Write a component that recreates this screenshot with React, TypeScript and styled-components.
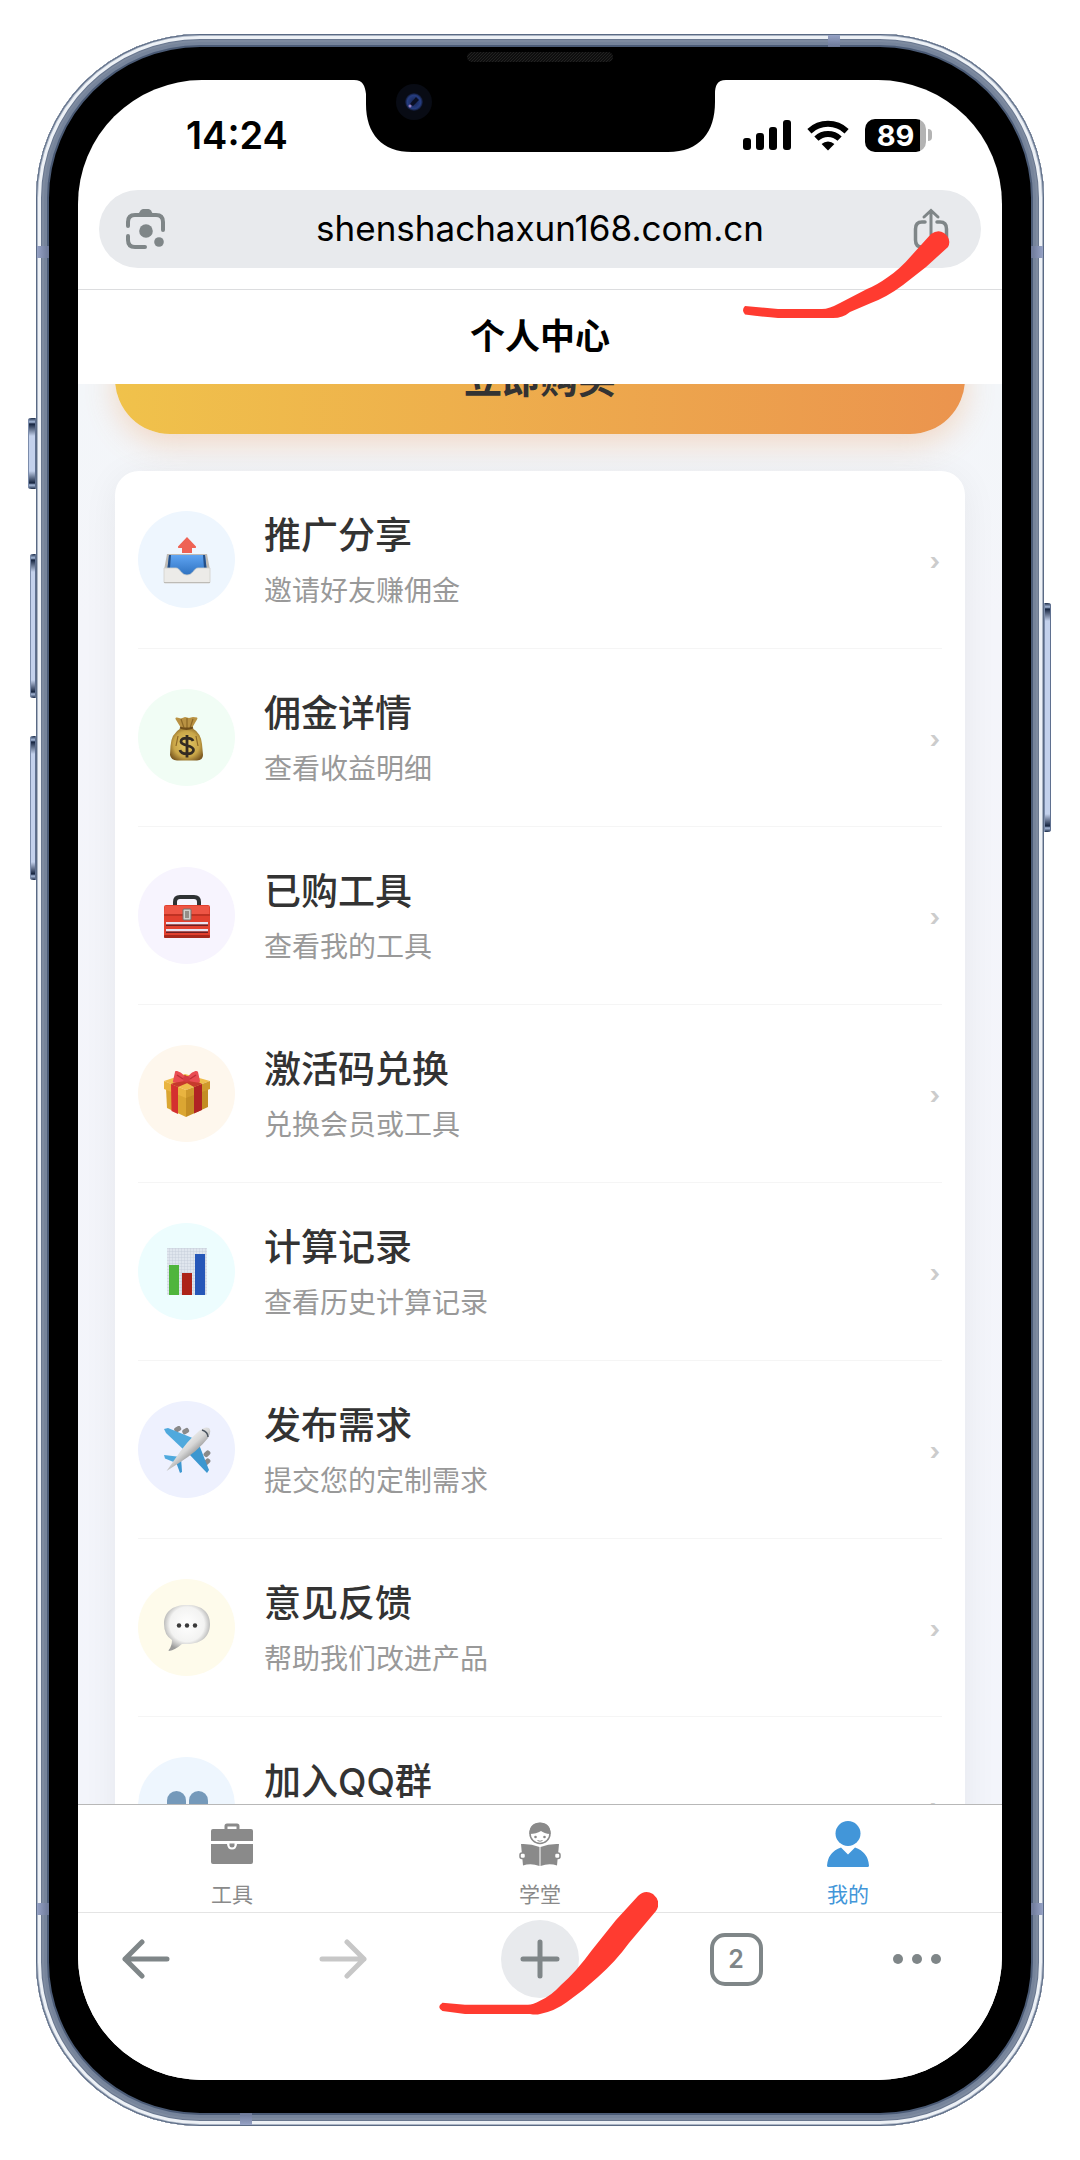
import React from "react";
import styled, { createGlobalStyle } from "styled-components";

const GlobalStyle = createGlobalStyle`
  *, *::before, *::after { box-sizing: border-box; }
  body {
    margin: 0;
    background: #fff;
    font-family: Inter, "Noto Sans CJK SC", sans-serif;
    -webkit-font-smoothing: antialiased;
  }
  button, input { font: inherit; color: inherit; }
  button { border: 0; padding: 0; background: none; cursor: pointer; }
  a { color: inherit; text-decoration: none; }
  svg { display: block; flex: none; }
`;

/* ---------- device shell ---------- */

const Page = styled.div`
  height: 100vh;
  padding: 34px 36px;
  background: #fff;
`;

const Phone = styled.div`
  position: relative;
  height: 100%;
  padding: 46px 42px;
  border-radius: 164px;
  background: #000;
  box-shadow:
    inset 0 0 0 1px #5a6a84,
    inset 0 0 0 2px #aab4c4,
    inset 0 0 0 5px #edf1f6,
    inset 0 0 0 6px #69778f,
    inset 0 0 0 8px #7e8ba0,
    inset 0 0 0 11px #76849b,
    inset 0 0 0 13px #4b5b76;
`;

const SideKey = styled.span<{ $side: "left" | "right"; $top: number; $length: number; $depth: number }>`
  position: absolute;
  ${(p) => p.$side}: -${(p) => p.$depth}px;
  top: ${(p) => p.$top}px;
  width: ${(p) => p.$depth}px;
  height: ${(p) => p.$length}px;
  border-radius: ${(p) => (p.$side === "left" ? "3px 0 0 3px" : "0 3px 3px 0")};
  background: linear-gradient(#1b2a45, #a9bcdc 4px, #14233f 6px, #c3d1ec 18px, #c3d1ec calc(100% - 18px), #14233f calc(100% - 6px), #a9bcdc calc(100% - 4px), #1b2a45);
  box-shadow: inset 1px 0 0 #7b8cab, inset -1px 0 0 #5f7090;
`;

const Antenna = styled.span<{ $edge: "top" | "bottom" | "left" | "right"; $at: string }>`
  position: absolute;
  ${(p) => p.$edge}: 1px;
  ${(p) => (p.$edge === "top" || p.$edge === "bottom" ? "left" : "top")}: ${(p) => p.$at};
  width: 12px;
  height: 12px;
  background: linear-gradient(
    to ${(p) => p.$edge},
    #6b7796,
    #97a3c6
  );
`;

const Notch = styled.svg`
  position: absolute;
  z-index: 3;
  top: 14px;
  left: 50%;
  margin-left: -190px;
`;

const Screen = styled.div`
  position: relative;
  display: flex;
  flex-direction: column;
  height: 100%;
  overflow: hidden;
  border-radius: 124px;
  background: #fff;
`;

/* ---------- top of the browser ---------- */

const StatusBar = styled.div`
  display: flex;
  flex: none;
  align-items: center;
  justify-content: space-between;
  height: 110px;
  padding: 0 70px 0 108px;
`;

const Clock = styled.time`
  font-size: 38px;
  line-height: 44px;
  font-weight: 600;
  color: #000;
`;

const StatusIcons = styled.div`
  display: flex;
  align-items: center;
  gap: 16px;
`;

const Battery = styled.div`
  display: flex;
  align-items: center;
  gap: 2px;
`;

const BatteryBody = styled.span`
  display: flex;
  align-items: center;
  justify-content: center;
  width: 61px;
  height: 33px;
  border-radius: 10px;
  background: linear-gradient(90deg, #000 55px, #b3b3b3 55px);
  color: #fff;
  font-size: 29px;
  line-height: 33px;
  font-weight: 700;
`;

const BatteryTip = styled.span`
  width: 4px;
  height: 12px;
  border-radius: 0 6px 6px 0;
  background: #b3b3b3;
`;

const AddressRow = styled.div`
  flex: none;
  padding: 0 21px 21px;
  border-bottom: 1px solid #dcdddf;
`;

const AddressBar = styled.div`
  display: flex;
  align-items: center;
  height: 78px;
  padding: 0 32px 0 26px;
  border-radius: 39px;
  background: #e8eaed;
  color: #7f8688;
`;

const AddressInput = styled.input`
  flex: 1;
  min-width: 0;
  border: 0;
  outline: 0;
  padding: 0 0 2px;
  background: none;
  color: #000;
  font-size: 35px;
  line-height: 44px;
  text-align: center;
`;

const PageHeader = styled.header`
  display: flex;
  flex: none;
  align-items: center;
  justify-content: center;
  height: 94px;
  padding-bottom: 2px;
  background: #fff;
`;

const PageTitle = styled.h1`
  margin: 0;
  font-size: 35px;
  line-height: 46px;
  font-weight: 700;
  color: #000;
`;

/* ---------- page content ---------- */

const Content = styled.main`
  flex: 1;
  min-height: 0;
  overflow: hidden;
  background: linear-gradient(#f3f6f9, #f4f5fa 240px, #f3f5fb);
`;

const Scrolled = styled.div`
  display: flex;
  flex-direction: column;
  gap: 37px;
  margin-top: -60px;
  padding: 0 37px;
`;

const BuyButton = styled.button`
  flex: none;
  height: 110px;
  border-radius: 55px;
  background: linear-gradient(90deg, #f0c24b, #eb944e);
  box-shadow: 0 10px 30px rgba(240, 150, 80, 0.3);
  color: #333;
  font-size: 38px;
  line-height: 46px;
  font-weight: 700;
`;

const Card = styled.ul`
  margin: 0;
  padding: 0 23px;
  list-style: none;
  border-radius: 24px;
  background: #fff;
  box-shadow: 0 5px 36px rgba(0, 0, 0, 0.06);
`;

const Item = styled.li`
  border-bottom: 1px solid #f5f5f5;
`;

const ItemLink = styled.a`
  display: flex;
  align-items: center;
  gap: 29px;
  height: 177px;
`;

const IconCircle = styled.span<{ $tint: string }>`
  display: flex;
  flex: none;
  align-items: center;
  justify-content: center;
  width: 97px;
  height: 97px;
  border-radius: 50%;
  background: ${(p) => p.$tint};
`;

const ItemText = styled.span`
  display: flex;
  flex: 1;
  flex-direction: column;
  gap: 14px;
  min-width: 0;
  min-height: 98px;
  padding-top: 2px;
`;

const ItemTitle = styled.span`
  font-size: 37px;
  line-height: 46px;
  font-weight: 500;
  color: #333;
`;

const ItemNote = styled.span`
  font-size: 28px;
  line-height: 36px;
  color: #999;
`;

const Chevron = styled.span`
  padding: 4px 2px 0 0;
  font-size: 24px;
  line-height: 36px;
  font-weight: 700;
  color: #ccc;
`;

/* ---------- bottom bars ---------- */

const Tabs = styled.nav`
  display: flex;
  flex: none;
  height: 108px;
  border-top: 1px solid #b8b8b8;
  background: #fff;
`;

const Tab = styled.a<{ $active?: boolean }>`
  display: flex;
  flex: 1;
  flex-direction: column;
  align-items: center;
  justify-content: space-between;
  padding: 14px 0 3px;
  color: ${(p) => (p.$active ? "#4296d9" : "#8a8a8a")};
  font-size: 21px;
  line-height: 28px;
`;

const Toolbar = styled.div`
  display: grid;
  flex: none;
  grid-template-columns: 136fr 258fr 136fr 256fr 106fr;
  align-items: start;
  justify-items: center;
  height: 168px;
  padding: 7px 32px 0 0;
  border-top: 1px solid #e4e4e4;
  background: #fff;
`;

const ToolButton = styled.button<{ $muted?: boolean; $filled?: boolean }>`
  display: flex;
  align-items: center;
  justify-content: center;
  width: 78px;
  height: 78px;
  border-radius: 50%;
  background: ${(p) => (p.$filled ? "#e8eaed" : "none")};
  color: ${(p) => (p.$muted ? "#c7c7c7" : "#7f8688")};
`;

const TabCount = styled.span`
  display: flex;
  align-items: center;
  justify-content: center;
  width: 53px;
  height: 53px;
  border: 4px solid #7f8688;
  border-radius: 15px;
  font-size: 25px;
  line-height: 28px;
  font-weight: 600;
`;

const IconButton = styled.button`
  display: flex;
`;

const Marker = styled.svg`
  position: absolute;
  z-index: 4;
  left: 50%;
  pointer-events: none;
`;

const TopMarker = styled(Marker)`
  top: 150px;
  margin-left: 203px;
`;

const BottomMarker = styled(Marker)`
  bottom: 64px;
  margin-left: -102px;
`;

/* ---------- drawings ---------- */

const NotchDrawing = () => (
  <Notch width="380" height="106" viewBox="0 0 380 106" aria-hidden="true">
    <defs>
      <pattern id="mesh" width="3" height="3" patternUnits="userSpaceOnUse">
        <rect width="3" height="3" fill="#0e0e0e" />
        <path d="M0 3L3 0" stroke="#222" strokeWidth="1" />
      </pattern>
      <radialGradient id="lens">
        <stop offset="0" stopColor="#121a3c" />
        <stop offset="0.35" stopColor="#1d2f66" />
        <stop offset="0.75" stopColor="#263d80" />
        <stop offset="1" stopColor="#0c1226" />
      </radialGradient>
    </defs>
    <path d="M0 0H380V32H376C367 32 365 38 365 46V54C365 84 350 104 318 104H62C32 104 16 86 16 56V46C15 38 13 32 4 32H0Z" fill="#000" />
    <rect x="117" y="4" width="146" height="10" rx="5" fill="url(#mesh)" />
    <circle cx="64" cy="54" r="18" fill="#080b14" />
    <circle cx="64" cy="54" r="9" fill="url(#lens)" />
    <path d="M60 56L66 49L69 52L63 58Z" fill="#0a0f24" />
    <circle cx="60" cy="58" r="1.5" fill="#9a7fc0" />
  </Notch>
);

const SignalIcon = () => (
  <svg width="48" height="30" viewBox="0 0 48 30" aria-hidden="true">
    <rect x="0" y="18" width="8" height="12" rx="3" />
    <rect x="13" y="13" width="8" height="17" rx="3" />
    <rect x="26" y="7" width="8" height="23" rx="3" />
    <rect x="40" y="0" width="8" height="30" rx="3" />
  </svg>
);

const WifiIcon = () => (
  <svg width="42" height="31" viewBox="0 0 42 31" aria-hidden="true">
    <path d="M2.4 11.2A27.2 27.2 0 0 1 39.6 11.2" fill="none" stroke="#000" strokeWidth="6" />
    <path d="M9.4 18.6A16.8 16.8 0 0 1 32.6 18.6" fill="none" stroke="#000" strokeWidth="6" />
    <path d="M14.6 24A9.4 9.4 0 0 1 27.4 24L21 30.4Z" />
  </svg>
);

const LensIcon = () => (
  <svg width="42" height="42" viewBox="0 0 42 42" aria-hidden="true">
    <g fill="none" stroke="currentColor" strokeWidth="4" strokeLinecap="round">
      <path d="M3 18V14Q3 7 10 7H31Q38 7 38 14V22" />
      <path d="M3 28V32Q3 39 10 39H20" />
    </g>
    <path d="M12 8L15.500 2.500Q16.500 1 18 1H23.500Q25 1 26 2.500L29 8Z" fill="currentColor" />
    <circle cx="21" cy="23" r="6.800" fill="currentColor" />
    <circle cx="34" cy="34" r="4.800" fill="currentColor" />
  </svg>
);

const ShareIcon = () => (
  <svg width="36" height="42" viewBox="0 0 36 42" fill="none" stroke="currentColor" strokeWidth="3" strokeLinecap="round" aria-hidden="true">
    <path d="M18 27V3M11 9L18 2.500L25 9" />
    <path d="M12 14H9Q2.500 14 2.500 21V32Q2.500 39 9 39H27Q33.500 39 33.500 32V21Q33.500 14 27 14H24" strokeWidth="3.500" />
  </svg>
);

const OutboxEmoji = () => (
  <svg width="48" height="48" viewBox="0 0 48 48" aria-hidden="true">
    <defs>
      <linearGradient id="well" x2="0" y2="1">
        <stop offset="0" stopColor="#5fa4f2" />
        <stop offset="1" stopColor="#2f72c0" />
      </linearGradient>
    </defs>
    <path d="M24 1L33 10.500Q33.500 12 32 12H29V17H19V12H16Q14.500 12 15 10.500Z" fill="#ee6355" />
    <path d="M4 18H44L47 34V47H1V34Z" fill="#bfbbb5" />
    <path d="M6 19H42L43.500 32V39H4.500V32Z" fill="url(#well)" />
    <path d="M6 19H8L7 32H4.500ZM40 19H42L43.500 32H41Z" fill="#234f88" />
    <path d="M1 32H13C17 32 18 39 24 39S31 32 35 32H47V46Q47 47 46 47H2Q1 47 1 46Z" fill="#ecebe8" stroke="#d2d0cc" strokeWidth="0.800" />
    <path d="M1 46.500H47" stroke="#bdbbb6" strokeWidth="1" />
  </svg>
);

const MoneyEmoji = () => (
  <svg width="48" height="48" viewBox="0 0 48 48" aria-hidden="true">
    <defs>
      <radialGradient id="sack" cx="0.5" cy="0.5" r="0.6">
        <stop offset="0" stopColor="#e3c865" />
        <stop offset="0.65" stopColor="#c9a648" />
        <stop offset="1" stopColor="#7a5820" />
      </radialGradient>
    </defs>
    <path d="M18 14L12.500 5Q12 3 14 3.500L18 4.500L22 3L26 4L30 3L34 3.500Q35 4 34 5.500L29 14Z" fill="#b99243" />
    <path d="M18 14Q8 20 7.500 32L7 41Q8 46 14 46.500H34Q40 46 40 41L39 30Q38 19 29 14Z" fill="url(#sack)" />
    <path d="M18 5L21 14M24 4V14M30 5L27 14M15 22L13 32M33 22L35 32" stroke="#8c6826" strokeWidth="1.200" fill="none" />
    <path d="M17 13.500Q23.500 16 30 13.500" stroke="#6f4d18" strokeWidth="2.400" fill="none" />
    <path d="M30 27C29 23.500 18 22.500 18 27.500C18 32.500 30.500 30.500 30.500 36C30.500 41.500 18 41 17 36M24 21V43.500" fill="none" stroke="#332b22" strokeWidth="2.800" />
  </svg>
);

const ToolboxEmoji = () => (
  <svg width="48" height="48" viewBox="0 0 48 48" aria-hidden="true">
    <path d="M12 14V10Q12 5 17 5H31Q36 5 36 10V14" fill="none" stroke="#2f3234" strokeWidth="4" />
    <rect x="1" y="13" width="46" height="33" rx="2" fill="#e2402f" />
    <path d="M2 14H46V22H1Z" fill="#ee5545" />
    <path d="M1 23H47" stroke="#9e2418" strokeWidth="1" />
    <rect x="1" y="43" width="46" height="3" rx="1" fill="#a8281c" />
    <rect x="3" y="30" width="42" height="2.500" fill="#e8e3f2" />
    <rect x="3" y="32.500" width="42" height="1.500" fill="#6d1f24" />
    <rect x="3" y="37" width="42" height="2.500" fill="#e8e3f2" />
    <rect x="3" y="39.500" width="42" height="1.500" fill="#6d1f24" />
    <rect x="20" y="17" width="8" height="11" rx="1" fill="#cfcfcb" stroke="#77716c" strokeWidth="1" />
    <rect x="22" y="19" width="4" height="7" fill="#938e87" />
  </svg>
);

const GiftEmoji = () => (
  <svg width="48" height="48" viewBox="0 0 48 48" aria-hidden="true">
    <path d="M3 18L23 27V47L4 38Z" fill="#dba632" />
    <path d="M23 27L45 18V37L23 47Z" fill="#c38d24" />
    <path d="M1 11L22 4L47 11L23 20Z" fill="#efbd4c" />
    <path d="M1 11L23 20V28L1 19Z" fill="#e9b440" />
    <path d="M47 11L23 20V28L47 19Z" fill="#cf992c" />
    <path d="M8 14L15 17V44L8.500 41Z" fill="#d4302f" />
    <path d="M31 17L39 14V40L31 43.500Z" fill="#b02324" />
    <path d="M8 14L29 6L36 8L15 17ZM15 8L22 5L39 14L31 17Z" fill="#c63a2c" />
    <path d="M23 8C18 1 12 0 12 2L10 11Q9 13 13 12.500L22 11ZM24 8C29 1 34 0 35 2L37 11Q37 13 34 12.500L25 11Z" fill="#e94d52" />
    <path d="M14 5L20 9M33 5L27 9" stroke="#bf3037" strokeWidth="1.500" />
    <ellipse cx="23.500" cy="9" rx="3.500" ry="3" fill="#d43c43" />
  </svg>
);

const ChartEmoji = () => (
  <svg width="48" height="48" viewBox="0 0 48 48" aria-hidden="true">
    <defs>
      <pattern id="grid" width="3" height="3" patternUnits="userSpaceOnUse">
        <rect width="3" height="3" fill="#e0e6ee" />
        <path d="M0 0H3M0 0V3" stroke="#c3ccd8" strokeWidth="0.800" />
      </pattern>
    </defs>
    <rect x="4" y="0" width="40" height="47" fill="url(#grid)" />
    <rect x="6" y="17" width="10" height="30" fill="#4fb53c" />
    <rect x="19" y="25" width="10" height="22" fill="#ad2318" />
    <rect x="32" y="6" width="10" height="41" fill="#2657b8" />
  </svg>
);

const PlaneEmoji = () => (
  <svg width="48" height="48" viewBox="0 0 48 48" aria-hidden="true">
    <defs>
      <linearGradient id="hull" x1="0.3" y1="0.3" x2="0.65" y2="0.7">
        <stop offset="0" stopColor="#f4f4f4" />
        <stop offset="0.5" stopColor="#d6d6d6" />
        <stop offset="1" stopColor="#858585" />
      </linearGradient>
    </defs>
    <g fill="#8a8a8a">
      <rect x="11" y="1" width="7" height="5" rx="2" transform="rotate(-32 14 3)" />
      <rect x="19" y="3" width="7" height="5" rx="2" transform="rotate(-32 22 5)" />
      <rect x="40" y="25" width="7" height="5" rx="2" transform="rotate(-45 44 27)" />
      <rect x="40" y="33" width="7" height="5" rx="2" transform="rotate(-45 44 35)" />
    </g>
    <path d="M1 3L5 2L32 13L21 24L3 7Z" fill="#4fa9dd" />
    <path d="M35 16L46 44L44 47L25 27Z" fill="#3c97d0" />
    <path d="M1 29L18 31L13 37L2 32.500Z" fill="#4fa9dd" />
    <path d="M13 36L18 31L19 46L17 47Z" fill="#3c97d0" />
    <path d="M3.500 45L12 33Q24 15 36 5Q42 0 46 2Q49 5 45 12Q35 25 16 37Z" fill="url(#hull)" />
    <path d="M39 4Q45 6 45 11" stroke="#4b5560" strokeWidth="1.500" fill="none" />
  </svg>
);

const SpeechEmoji = () => (
  <svg width="48" height="48" viewBox="0 0 48 48" aria-hidden="true">
    <defs>
      <radialGradient id="bubble" cx="0.5" cy="0.42" r="0.58">
        <stop offset="0" stopColor="#fff" />
        <stop offset="0.65" stopColor="#f3f3f2" />
        <stop offset="1" stopColor="#9c9c9b" />
      </radialGradient>
    </defs>
    <path d="M24 1C40 1 47 9 47 20S40 40 24 40H19Q12 46 6 47Q5 47 6 45.500Q9 42 9 36Q1 31 1 20C1 9 8 1 24 1Z" fill="url(#bubble)" />
    <circle cx="16" cy="21.500" r="2.200" fill="#3a3a3a" />
    <circle cx="24" cy="21.500" r="2.200" fill="#3a3a3a" />
    <circle cx="32" cy="21.500" r="2.200" fill="#3a3a3a" />
  </svg>
);

const PeopleEmoji = () => (
  <svg width="48" height="48" viewBox="0 0 48 48" aria-hidden="true">
    <g fill="#7599ba">
      <rect x="4" y="9" width="19" height="25" rx="9.500" />
      <path d="M0 42Q0 34 13 34T26 42Z" />
      <rect x="26" y="9" width="19" height="25" rx="9.500" />
      <path d="M22 42Q22 34 35 34T48 42Z" />
    </g>
  </svg>
);

const BriefcaseIcon = () => (
  <svg width="42" height="48" viewBox="0 0 42 48" aria-hidden="true">
    <path d="M15 11V7Q15 6 16 6H26Q27 6 27 7V11" fill="none" stroke="currentColor" strokeWidth="3" />
    <path d="M2 10H40Q42 10 42 12V22H0V12Q0 10 2 10Z" fill="currentColor" />
    <path d="M0 25H16Q16.500 30.500 21 30.500T26 25H42V43Q42 45 40 45H2Q0 45 0 43Z" fill="currentColor" />
    <path d="M18.500 24.500H23.500V26.500Q23.500 28.500 21 28.500T18.500 26.500Z" fill="currentColor" />
  </svg>
);

const ReaderIcon = () => (
  <svg width="42" height="48" viewBox="0 0 42 48" aria-hidden="true">
    <circle cx="21" cy="14.500" r="10" fill="#fff" stroke="currentColor" strokeWidth="1.500" />
    <path d="M10.500 15C10 7 15 3.500 21 3.500S32 7 31.500 15C27 15 24 13.500 22 12C19 14 15 15 10.500 15Z" fill="currentColor" />
    <circle cx="16.500" cy="18" r="1.300" fill="currentColor" />
    <circle cx="25.500" cy="18" r="1.300" fill="currentColor" />
    <path d="M18.500 21.500Q21 23 23.500 21.500" fill="none" stroke="currentColor" strokeWidth="1" />
    <path d="M2 25Q12 24.500 20.500 28V47Q12 44 4 46.500Z" fill="currentColor" />
    <path d="M40 25Q30 24.500 21.500 28V47Q30 44 38 46.500Z" fill="currentColor" />
    <rect x="1" y="34" width="5.500" height="5.500" rx="2" fill="#fff" stroke="currentColor" strokeWidth="1.500" />
    <rect x="35.500" y="34" width="5.500" height="5.500" rx="2" fill="#fff" stroke="currentColor" strokeWidth="1.500" />
  </svg>
);

const PersonIcon = () => (
  <svg width="42" height="48" viewBox="0 0 42 48" aria-hidden="true">
    <circle cx="21" cy="14.500" r="12.500" fill="currentColor" />
    <path d="M14 28.500L21 35.500L28 28.500Q41 33 42 46.500Q42 48 40.500 48H1.500Q0 48 0 46.500Q1 33 14 28.500Z" fill="currentColor" />
  </svg>
);

const ArrowIcon = ({ forward = false }: { forward?: boolean }) => (
  <svg width="48" height="42" viewBox="0 0 48 42" fill="none" stroke="currentColor" strokeWidth="5" strokeLinecap="round" strokeLinejoin="round" aria-hidden="true">
    <path d={forward ? "M3 21H45M28 4L45 21L28 38" : "M45 21H3M20 4L3 21L20 38"} />
  </svg>
);

const PlusIcon = () => (
  <svg width="40" height="40" viewBox="0 0 40 40" fill="none" stroke="currentColor" strokeWidth="5" strokeLinecap="round" aria-hidden="true">
    <path d="M20 3V37M3 20H37" />
  </svg>
);

const MoreIcon = () => (
  <svg width="48" height="12" viewBox="0 0 48 12" fill="currentColor" aria-hidden="true">
    <circle cx="5" cy="6" r="5" />
    <circle cx="24" cy="6" r="5" />
    <circle cx="43" cy="6" r="5" />
  </svg>
);

/* ---------- data ---------- */

const items = [
  { title: "推广分享", note: "邀请好友赚佣金", tint: "#eef6fe", Icon: OutboxEmoji },
  { title: "佣金详情", note: "查看收益明细", tint: "#f1fdf5", Icon: MoneyEmoji },
  { title: "已购工具", note: "查看我的工具", tint: "#f7f4fe", Icon: ToolboxEmoji },
  { title: "激活码兑换", note: "兑换会员或工具", tint: "#fef7ed", Icon: GiftEmoji },
  { title: "计算记录", note: "查看历史计算记录", tint: "#edfdfe", Icon: ChartEmoji },
  { title: "发布需求", note: "提交您的定制需求", tint: "#eef1fe", Icon: PlaneEmoji },
  { title: "意见反馈", note: "帮助我们改进产品", tint: "#fefbeb", Icon: SpeechEmoji },
  { title: "加入QQ群", note: "", tint: "#eef6fe", Icon: PeopleEmoji },
];

const tabs = [
  { label: "工具", Icon: BriefcaseIcon, active: false },
  { label: "学堂", Icon: ReaderIcon, active: false },
  { label: "我的", Icon: PersonIcon, active: true },
];

export default function App() {
  return (
    <Page>
      <GlobalStyle />
      <Phone>
        <SideKey $side="left" $top={384} $length={71} $depth={8} />
        <SideKey $side="left" $top={520} $length={144} $depth={6} />
        <SideKey $side="left" $top={702} $length={144} $depth={6} />
        <SideKey $side="right" $top={569} $length={229} $depth={7} />
        <Antenna $edge="left" $at="212px" />
        <Antenna $edge="right" $at="212px" />
        <Antenna $edge="left" $at="calc(100% - 223px)" />
        <Antenna $edge="right" $at="calc(100% - 223px)" />
        <Antenna $edge="top" $at="calc(100% - 216px)" />
        <Antenna $edge="bottom" $at="204px" />
        <NotchDrawing />
        <Screen>
          <StatusBar>
            <Clock>14:24</Clock>
            <StatusIcons>
              <SignalIcon />
              <WifiIcon />
              <Battery>
                <BatteryBody>89</BatteryBody>
                <BatteryTip />
              </Battery>
            </StatusIcons>
          </StatusBar>
          <AddressRow>
            <AddressBar>
              <IconButton type="button" aria-label="Search with camera">
                <LensIcon />
              </IconButton>
              <AddressInput type="text" aria-label="Address" defaultValue="shenshachaxun168.com.cn" />
              <IconButton type="button" aria-label="Share">
                <ShareIcon />
              </IconButton>
            </AddressBar>
          </AddressRow>
          <PageHeader>
            <PageTitle>个人中心</PageTitle>
          </PageHeader>
          <Content>
            <Scrolled>
              <BuyButton type="button">立即购买</BuyButton>
              <Card>
                {items.map(({ title, note, tint, Icon }) => (
                  <Item key={title}>
                    <ItemLink href="#">
                      <IconCircle $tint={tint}>
                        <Icon />
                      </IconCircle>
                      <ItemText>
                        <ItemTitle>{title}</ItemTitle>
                        {note && <ItemNote>{note}</ItemNote>}
                      </ItemText>
                      <Chevron aria-hidden="true">›</Chevron>
                    </ItemLink>
                  </Item>
                ))}
              </Card>
            </Scrolled>
          </Content>
          <Tabs>
            {tabs.map(({ label, Icon, active }) => (
              <Tab key={label} href="#" $active={active}>
                <Icon />
                {label}
              </Tab>
            ))}
          </Tabs>
          <Toolbar>
            <ToolButton type="button" aria-label="Back">
              <ArrowIcon />
            </ToolButton>
            <ToolButton type="button" aria-label="Forward" $muted>
              <ArrowIcon forward />
            </ToolButton>
            <ToolButton type="button" aria-label="New tab" $filled>
              <PlusIcon />
            </ToolButton>
            <ToolButton type="button" aria-label="Open tabs">
              <TabCount>2</TabCount>
            </ToolButton>
            <ToolButton type="button" aria-label="More">
              <MoreIcon />
            </ToolButton>
          </Toolbar>
          <TopMarker width="208" height="90" viewBox="0 0 208 90" aria-hidden="true">
            <path
              d="M2 76L35 79H79Q86 79 97 73L124 59Q134 55 145 47Q157 39 169 25L188 4Q195 -1 201 3Q209 9 205 17L183 37L160 55Q144 67 128 73L107 82Q100 88 90 88H35Q22 87 2 84.500Q-2 80 2 76Z"
              fill="#ff3b30"
            />
          </TopMarker>
          <BottomMarker width="220" height="126" viewBox="0 0 220 126" aria-hidden="true">
            <path
              d="M4.500 112.700L27 114.700H90Q95 114.700 102 110.700Q113 106 123 95Q138 82 154 60L178 30L200 6Q207 -1 215 4Q224 12 218 21L191 53Q178 71 160 87Q145 101 129 112Q117 121 102 124Q98 125 92 124H27L4.500 121Q-2 117 4.500 112.700Z"
              fill="#ff3b30"
            />
          </BottomMarker>
        </Screen>
      </Phone>
    </Page>
  );
}
